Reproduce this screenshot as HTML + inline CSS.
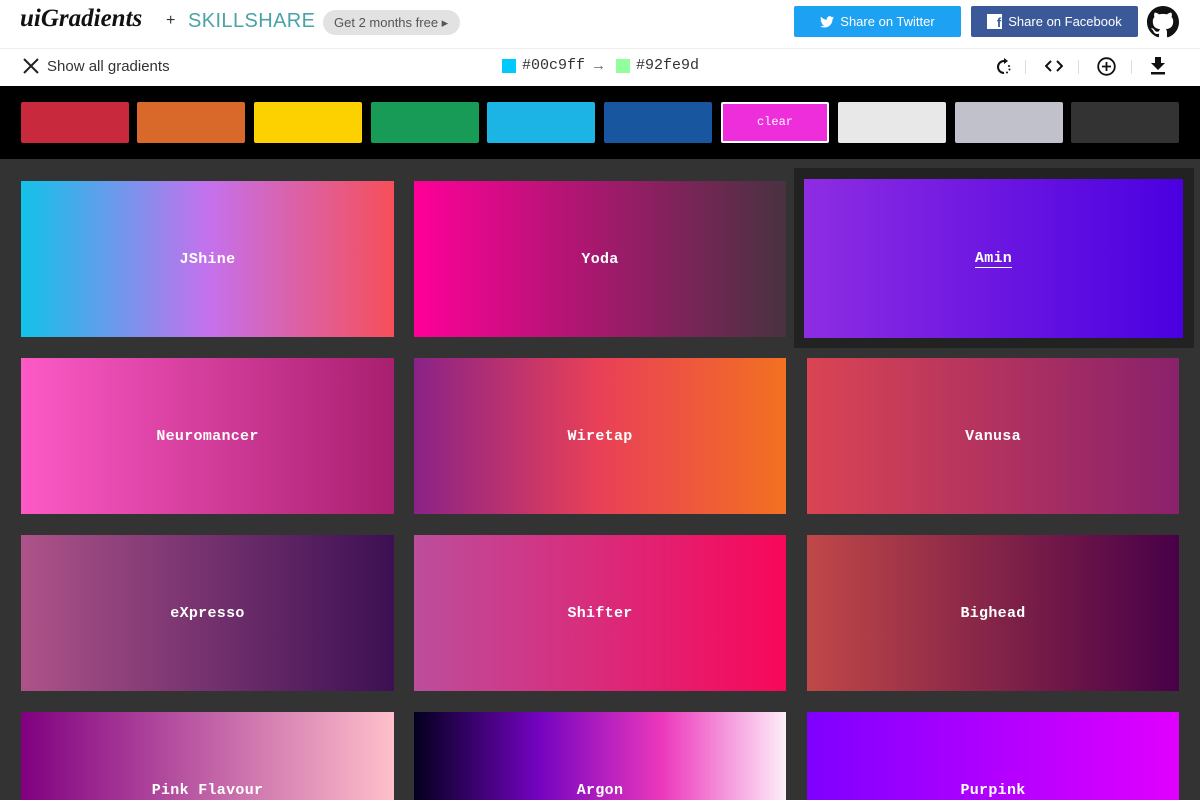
<!DOCTYPE html><html><head><style>
*{margin:0;padding:0;box-sizing:border-box}
html,body{width:1200px;height:800px;overflow:hidden}
body{background:#333;font-family:"Liberation Sans",sans-serif;position:relative}
.a{position:absolute}
.sw{position:absolute;top:102px;width:108px;height:41px;border-radius:2px}
.c{position:absolute;width:373px;height:156px;text-align:center;padding-top:70px;color:#fff;font:bold 15px/18px "Liberation Mono",monospace;letter-spacing:.3px;overflow:hidden}
.btn{position:absolute;top:6px;height:31px;color:#fff;font-size:13px;display:flex;align-items:center;justify-content:center;border-radius:2px}
</style></head><body>
<div class="a" style="left:0;top:0;width:1200px;height:86px;background:#fff"></div>
<div class="a" style="left:0;top:48px;width:1200px;height:1px;background:#eee"></div>
<div class="a" style="left:20px;top:5px;font:italic bold 25px 'Liberation Serif',serif;color:#111">uiGradients</div>
<div class="a" style="left:166px;top:12px;font-size:16px;color:#333">+</div>
<div class="a" style="left:188px;top:10px;font-size:20px;color:#4aa3a6;letter-spacing:.4px">SKILLSHARE</div>
<div class="a" style="left:323px;top:10px;width:137px;height:25px;border-radius:13px;background:#e2e2e2;color:#555;font-size:13px;line-height:25px;padding-left:11px">Get 2 months free ▸</div>
<div class="btn" style="left:794px;width:167px;background:#1da1f2">
<svg width="14" height="12" viewBox="0 0 24 20" style="margin-right:6px"><path fill="#fff" d="M24 2.4a9.8 9.8 0 01-2.8.8A4.9 4.9 0 0023.3.5a9.9 9.9 0 01-3.1 1.2A4.9 4.9 0 0011.8 6 14 14 0 011.7.9a4.9 4.9 0 001.5 6.6 4.9 4.9 0 01-2.2-.6 4.9 4.9 0 003.9 4.9 4.9 4.9 0 01-2.2.1 4.9 4.9 0 004.6 3.4A9.9 9.9 0 010 17.3 14 14 0 007.5 19.5c9.1 0 14-7.5 14-14v-.6A10 10 0 0024 2.4z"/></svg>Share on Twitter</div>
<div class="btn" style="left:971px;width:167px;background:#3b5998"><span style="display:inline-block;width:15px;height:15px;background:#fff;color:#3b5998;font-weight:bold;font-size:13px;text-align:right;margin-right:6px;line-height:17px;padding-right:1px">f</span>Share on Facebook</div>
<svg class="a" style="left:1147px;top:6px" width="32" height="32" viewBox="0 0 16 16"><path fill="#111" d="M8 0C3.58 0 0 3.58 0 8c0 3.54 2.29 6.530 5.47 7.59.4.07.55-.17.55-.38v-1.33c-2.230.48-2.7-1.07-2.7-1.07-.36-.92-.89-1.17-.89-1.17-.73-.5.05-.49.05-.49.8.06 1.23.83 1.23.83.71 1.23 1.87.87 2.33.67.07-.52.28-.87.5-1.07-1.78-.2-3.64-.89-3.64-3.95 0-.87.31-1.59.82-2.150-.08-.2-.36-1.02.08-2.12 0 0 .67-.21 2.2.82.64-.18 1.32-.27 2-.27s1.36.09 2 .27c1.53-1.04 2.2-.82 2.2-.82.44 1.1.16 1.92.08 2.12.51.56.82 1.27.82 2.15 0 3.07-1.870 3.75-3.65 3.95.29.25.54.73.54 1.48v2.2c0 .21.15.46.55.38A8.01 8.01 0 0016 8c0-4.42-3.58-8-8-8z"/></svg>
<svg class="a" style="left:22px;top:57px" width="18" height="18" viewBox="0 0 18 18"><path d="M2 2L16 16M16 2L2 16" stroke="#222" stroke-width="2"/></svg>
<div class="a" style="left:47px;top:58px;font-size:15px;color:#333">Show all gradients</div>
<div class="a" style="left:502px;top:59px;width:14px;height:14px;background:#00c9ff"></div>
<div class="a" style="left:522px;top:57px;font:15px 'Liberation Mono',monospace;color:#333">#00c9ff</div>
<div class="a" style="left:591px;top:57px;font-size:15px;color:#666">→</div>
<div class="a" style="left:616px;top:59px;width:14px;height:14px;background:#92fe9d"></div>
<div class="a" style="left:636px;top:57px;font:15px 'Liberation Mono',monospace;color:#333">#92fe9d</div>
<svg class="a" style="left:995px;top:58px" width="18" height="18" viewBox="0 0 18 18"><path d="M9 3A6 6 0 1 0 9 15" fill="none" stroke="#111" stroke-width="2"/><path d="M9 0L13 3L9 6Z" fill="#111"/><circle cx="14" cy="8" r="1" fill="#111"/><circle cx="14.5" cy="11.5" r="1" fill="#111"/><circle cx="12" cy="14.5" r="1" fill="#111"/></svg>
<svg class="a" style="left:1045px;top:60px" width="18" height="12" viewBox="0 0 18 12"><path d="M6 1L1 6L6 11M12 1L17 6L12 11" fill="none" stroke="#111" stroke-width="2"/></svg>
<svg class="a" style="left:1097px;top:57px" width="19" height="19" viewBox="0 0 19 19"><circle cx="9.5" cy="9.5" r="8.3" fill="none" stroke="#111" stroke-width="1.8"/><path d="M9.5 5V14M5 9.5H14" stroke="#111" stroke-width="1.8"/></svg>
<svg class="a" style="left:1150px;top:57px" width="16" height="18" viewBox="0 0 16 18"><path d="M5 0H11V6H15L8 13L1 6H5Z" fill="#111"/><rect x="1" y="15" width="14" height="2.5" fill="#111"/></svg>
<div class="a" style="left:1025px;top:60px;width:1px;height:14px;background:#ddd"></div>
<div class="a" style="left:1078px;top:60px;width:1px;height:14px;background:#ddd"></div>
<div class="a" style="left:1131px;top:60px;width:1px;height:14px;background:#ddd"></div>
<div class="a" style="left:0;top:86px;width:1200px;height:73px;background:#000"></div>
<div class="sw" style="left:21px;background:#c8293c"></div>
<div class="sw" style="left:137px;background:#d8692a"></div>
<div class="sw" style="left:254px;background:#fdd000"></div>
<div class="sw" style="left:371px;background:#179b57"></div>
<div class="sw" style="left:487px;background:#1bb4e4"></div>
<div class="sw" style="left:604px;background:#18579f"></div>
<div class="sw" style="left:721px;background:#ee2ddb;border:2px solid #fff;color:#fff;font:12px 'Liberation Mono',monospace;text-align:center;line-height:37px">clear</div>
<div class="sw" style="left:838px;background:#e8e8e8"></div>
<div class="sw" style="left:955px;background:#c1c1cb"></div>
<div class="sw" style="left:1071px;background:#333"></div>
<div class="a" style="left:794px;top:168px;width:400px;height:180px;background:#222"></div>
<div class="c" style="left:21px;top:181px;background:linear-gradient(90deg,#12c2e9,#c471ed,#f64f59)">JShine</div>
<div class="c" style="left:414px;top:181px;width:372px;background:linear-gradient(90deg,#ff0099,#493240)">Yoda</div>
<div class="c" style="left:804px;top:179px;width:379px;height:159px;padding-top:71px;background:linear-gradient(90deg,#8e2de2,#4a00e0)"><span style="border-bottom:1px solid #fff">Amin</span></div>
<div class="c" style="left:21px;top:358px;background:linear-gradient(90deg,#fc5ac6,#a91f6f)">Neuromancer</div>
<div class="c" style="left:414px;top:358px;width:372px;background:linear-gradient(90deg,#8a2387,#e94057,#f27121)">Wiretap</div>
<div class="c" style="left:807px;top:358px;width:372px;background:linear-gradient(90deg,#da4453,#89216b)">Vanusa</div>
<div class="c" style="left:21px;top:535px;background:linear-gradient(90deg,#ad5389,#3c1053)">eXpresso</div>
<div class="c" style="left:414px;top:535px;width:372px;background:linear-gradient(90deg,#bc4e9c,#f80759)">Shifter</div>
<div class="c" style="left:807px;top:535px;width:372px;background:linear-gradient(90deg,#c04848,#480048)">Bighead</div>
<div class="c" style="left:21px;top:712px;height:88px;background:linear-gradient(90deg,#800080,#ffc0cb)">Pink Flavour</div>
<div class="c" style="left:414px;top:712px;height:88px;width:372px;background:linear-gradient(90deg,#03001e,#7303c0,#ec38bc,#fdeff9)">Argon</div>
<div class="c" style="left:807px;top:712px;height:88px;width:372px;background:linear-gradient(90deg,#7f00ff,#e100ff)">Purpink</div>
</body></html>
